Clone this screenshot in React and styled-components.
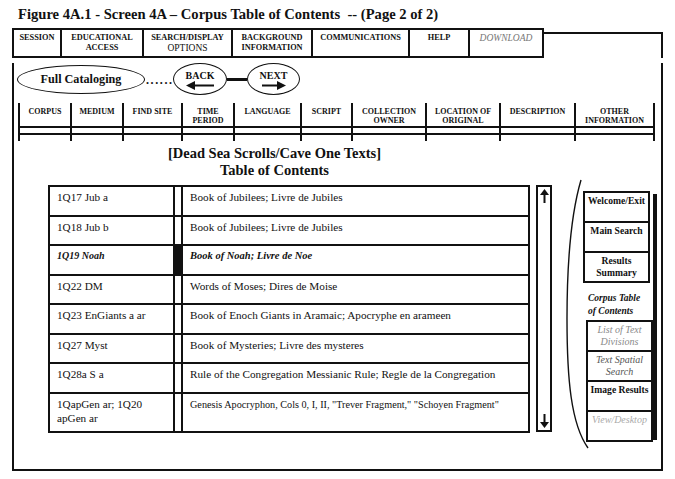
import styled, { createGlobalStyle } from "styled-components";

const GlobalStyle = createGlobalStyle`
    * { box-sizing: border-box; }
    body {
        margin: 0;
        background: #fff;
        color: #111;
        font-family: "Liberation Serif", "Times New Roman", serif;
    }
`

const menu = [
    { lines: ["SESSION"], w: 48 },
    { lines: ["EDUCATIONAL", "ACCESS"], w: 82 },
    { lines: ["SEARCH/DISPLAY"], sub: "OPTIONS", w: 89 },
    { lines: ["BACKGROUND", "INFORMATION"], w: 80 },
    { lines: ["COMMUNICATIONS"], w: 97 },
    { lines: ["HELP"], w: 60 },
    { lines: ["DOWNLOAD"], w: 74, muted: true },
]

const headers = [
    { lines: ["CORPUS"], w: 52 },
    { lines: ["MEDIUM"], w: 52 },
    { lines: ["FIND SITE"], w: 59 },
    { lines: ["TIME", "PERIOD"], w: 52 },
    { lines: ["LANGUAGE"], w: 67 },
    { lines: ["SCRIPT"], w: 51 },
    { lines: ["COLLECTION", "OWNER"], w: 74 },
    { lines: ["LOCATION OF", "ORIGINAL"], w: 74 },
    { lines: ["DESCRIPTION"], w: 75 },
    { lines: ["OTHER", "INFORMATION"], w: 81 },
]

const rows = [
    { code: "1Q17 Jub a", title: "Book of Jubilees; Livre de Jubiles" },
    { code: "1Q18 Jub b", title: "Book of Jubilees; Livre de Jubiles" },
    { code: "1Q19 Noah", title: "Book of Noah; Livre de Noe", selected: true },
    { code: "1Q22 DM", title: "Words of Moses; Dires de Moise" },
    { code: "1Q23 EnGiants a ar", title: "Book of Enoch Giants in Aramaic; Apocryphe en arameen" },
    { code: "1Q27 Myst", title: "Book of Mysteries; Livre des mysteres" },
    { code: "1Q28a S a", title: "Rule of the Congregation Messianic Rule; Regle de la Congregation" },
    { code: "1QapGen ar; 1Q20 apGen ar", title: "Genesis Apocryphon, Cols 0, I, II, \"Trever Fragment,\" \"Schoyen Fragment\"", small: true, last: true },
]

const sideTop = [
    { lines: ["Welcome/Exit"] },
    { lines: ["Main Search"] },
    { lines: ["Results", "Summary"] },
]

const sideBottom = [
    { lines: ["List of Text", "Divisions"], tone: "#8a8a8a" },
    { lines: ["Text Spatial", "Search"], tone: "#555" },
    { lines: ["Image Results"], bold: true },
    { lines: ["View/Desktop"], tone: "#aaa" },
]

function App() {
    return (
        <Page>
            <GlobalStyle />
            <Title>Figure 4A.1 - Screen 4A – Corpus Table of Contents &nbsp;-- (Page 2 of 2)</Title>
            <TopRow>
                <Menu>
                    {menu.map((m, i) => (
                        <MenuCell key={i} $w={m.w} $muted={m.muted}>
                            {m.lines.map(l => <div key={l}>{l}</div>)}
                            {m.sub ? <MenuSub>{m.sub}</MenuSub> : ''}
                        </MenuCell>
                    ))}
                </Menu>
                <FrameTop />
            </TopRow>
            <Body>
                <NavRow>
                    <Ellipse $w={128} $h={29}><Big>Full Cataloging</Big></Ellipse>
                    <Dots>......</Dots>
                    <Ellipse $w={54} $h={32} $col>
                        <Small>BACK</Small>
                        <Arrow dir="left" />
                    </Ellipse>
                    <Connector />
                    <Ellipse $w={53} $h={32} $col>
                        <Small>NEXT</Small>
                        <Arrow dir="right" />
                    </Ellipse>
                </NavRow>

                <HeaderGrid>
                    {headers.map((h, i) => (
                        <HeadCol key={i} $w={h.w} $last={i === headers.length - 1}>
                            <HeadLabel>{h.lines.map(l => <div key={l}>{l}</div>)}</HeadLabel>
                            <HeadGap $line />
                            <HeadGap />
                        </HeadCol>
                    ))}
                </HeaderGrid>

                <Heading>
                    <div>[Dead Sea Scrolls/Cave One Texts]</div>
                    <div>Table of Contents</div>
                </Heading>

                <Lower>
                    <Table>
                        {rows.map((r, i) => (
                            <Row key={i} $last={r.last}>
                                <Code $selected={r.selected}>{r.code}</Code>
                                <Marker $selected={r.selected} />
                                <Entry $selected={r.selected} $small={r.small}>{r.title}</Entry>
                            </Row>
                        ))}
                    </Table>
                    <Scroll>
                        <ScrollArrow up />
                        <ScrollArrow />
                    </Scroll>
                    <Bracket width="24" height="270" viewBox="0 0 24 270">
                        <path d="M16 1 C6 35 2 90 2 140 C2 200 6 245 23 269" fill="none" stroke="#111" strokeWidth="1.4" />
                    </Bracket>
                    <Side>
                        <SideStack>
                            <SideGroup $w={67}>
                                {sideTop.map((s, i) => (
                                    <SideItem key={i} $bold $last={i === sideTop.length - 1}>
                                        {s.lines.map(l => <div key={l}>{l}</div>)}
                                    </SideItem>
                                ))}
                            </SideGroup>
                            <Caption>Corpus Table<br />of Contents</Caption>
                            <SideGroup $w={67} $shift={3}>
                                {sideBottom.map((s, i) => (
                                    <SideItem key={i} $bold={s.bold} $tone={s.tone} $last={i === sideBottom.length - 1}>
                                        {s.lines.map(l => <div key={l}>{l}</div>)}
                                    </SideItem>
                                ))}
                            </SideGroup>
                        </SideStack>
                        <SideBar />
                    </Side>
                </Lower>
            </Body>
        </Page>
    )
}

function Arrow({ dir }) {
    return (
        <svg width="28" height="9" viewBox="0 0 28 9">
            {dir === "left" ? (
                <g fill="#111">
                    <rect x="7" y="3.5" width="21" height="2" />
                    <polygon points="0,4.5 9,0 9,9" />
                </g>
            ) : (
                <g fill="#111">
                    <rect x="2" y="3.5" width="18" height="2" />
                    <polygon points="26,4.5 17,0 17,9" />
                </g>
            )}
        </svg>
    )
}

function ScrollArrow({ up }) {
    return (
        <svg width="9" height="14" viewBox="0 0 9 14">
            {up ? (
                <g fill="#111">
                    <polygon points="4.5,0 0,6 9,6" />
                    <rect x="3.5" y="5" width="2" height="9" />
                </g>
            ) : (
                <g fill="#111">
                    <polygon points="4.5,14 0,8 9,8" />
                    <rect x="3.5" y="0" width="2" height="9" />
                </g>
            )}
        </svg>
    )
}

const Page = styled.div`
    width: 675px;
    height: 479px;
    overflow: hidden;
    padding: 5px 0 0 12px;
`

const Title = styled.div`
    font-size: 14.6px;
    font-weight: bold;
    line-height: 18px;
    height: 18px;
    margin-left: 6px;
    white-space: nowrap;
`

const TopRow = styled.div`
    display: flex;
    align-items: flex-start;
    width: 651px;
    margin-top: 5px;
`

const Menu = styled.div`
    display: flex;
    height: 30px;
    border: 2px solid #111;
    border-right: none;
`

const MenuCell = styled.div`
    width: ${p => p.$w}px;
    border-right: 2px solid #111;
    padding-top: 3px;
    text-align: center;
    font-size: ${p => p.$muted ? '9.5px' : '8.3px'};
    font-weight: ${p => p.$muted ? 'normal' : 'bold'};
    font-style: ${p => p.$muted ? 'italic' : 'normal'};
    color: ${p => p.$muted ? '#777' : '#111'};
    line-height: 10px;
`

const MenuSub = styled.div`
    font-weight: normal;
    font-size: 9.5px;
    line-height: 11px;
`

const FrameTop = styled.div`
    flex: 1;
    height: 26px;
    margin-top: 4px;
    border-top: 2px solid #111;
    border-right: 2px solid #111;
`

const Body = styled.div`
    width: 651px;
    height: 408px;
    border: 2px solid #111;
    border-top: none;
`

const NavRow = styled.div`
    display: flex;
    align-items: center;
    height: 32px;
    margin-top: 5px;
    padding-left: 3px;
`

const Ellipse = styled.div`
    width: ${p => p.$w}px;
    height: ${p => p.$h}px;
    border: 1.5px solid #111;
    border-radius: 50%;
    display: flex;
    flex-direction: ${p => p.$col ? 'column' : 'row'};
    align-items: center;
    justify-content: center;
`

const Big = styled.span`
    font-size: 12.2px;
    font-weight: bold;
`

const Small = styled.span`
    font-size: 10px;
    font-weight: bold;
    line-height: 11px;
    margin-top: 1px;
`

const Dots = styled.span`
    width: 28px;
    font-size: 12px;
    font-weight: bold;
    letter-spacing: 1.6px;
    padding-left: 1px;
    margin-top: 3px;
`

const Connector = styled.div`
    width: 20px;
    height: 3px;
    background: #111;
`

const HeaderGrid = styled.div`
    display: flex;
    margin: 8px 0 0 4px;
`

const HeadCol = styled.div`
    width: ${p => p.$w}px;
    border-left: 2px solid #111;
    border-right: ${p => p.$last ? '2px solid #111' : 'none'};
`

const HeadLabel = styled.div`
    height: 25px;
    border-bottom: 2px solid #111;
    padding-top: 4px;
    text-align: center;
    font-size: 8px;
    font-weight: bold;
    line-height: 9px;
    white-space: nowrap;
`

const HeadGap = styled.div`
    height: ${p => p.$line ? 7 : 6}px;
    border-bottom: ${p => p.$line ? '2px solid #111' : 'none'};
`

const Heading = styled.div`
    width: 521px;
    margin-top: 4px;
    text-align: center;
    font-size: 14.5px;
    font-weight: bold;
    line-height: 17px;
`

const Lower = styled.div`
    display: flex;
    align-items: flex-start;
    margin-left: 34px;
`

const Table = styled.div`
    width: 482px;
    margin-top: 6px;
    border: 2px solid #111;
`

const Row = styled.div`
    display: flex;
    height: ${p => p.$last ? '37px' : '29.5px'};
    border-bottom: ${p => p.$last ? 'none' : '2px solid #111'};
`

const Code = styled.div`
    width: 125px;
    border-right: 2px solid #111;
    padding: 3px 8px 0 7px;
    font-size: ${p => p.$selected ? '10px' : '11.2px'};
    font-weight: ${p => p.$selected ? 'bold' : 'normal'};
    font-style: ${p => p.$selected ? 'italic' : 'normal'};
    line-height: 14px;
`

const Marker = styled.div`
    width: 8px;
    border-right: 2px solid #111;
    background: ${p => p.$selected ? '#111' : '#fff'};
`

const Entry = styled.div`
    flex: 1;
    padding: ${p => p.$small ? '4px' : '3px'} 6px 0 7px;
    font-size: ${p => p.$small ? '10.2px' : p.$selected ? '10.5px' : '11.2px'};
    font-weight: ${p => p.$selected ? 'bold' : 'normal'};
    font-style: ${p => p.$selected ? 'italic' : 'normal'};
    line-height: 14px;
    white-space: nowrap;
`

const Scroll = styled.div`
    width: 16px;
    height: 247px;
    margin: 6px 0 0 6px;
    border: 2px solid #111;
    display: flex;
    flex-direction: column;
    align-items: center;
    justify-content: space-between;
    padding: 2px 0;
`

const Bracket = styled.svg`
    display: block;
    flex-shrink: 0;
    margin: 0 -6px 0 13px;
`

const Side = styled.div`
    display: flex;
    margin-top: 12px;
`

const SideStack = styled.div`
    width: 70px;
`

const SideGroup = styled.div`
    width: ${p => p.$w}px;
    margin-left: ${p => p.$shift || 0}px;
    border: 2px solid #111;
`

const SideItem = styled.div`
    height: ${p => p.$last ? '28px' : '30px'};
    border-bottom: ${p => p.$last ? 'none' : '2px solid #111'};
    padding-top: 2px;
    text-align: center;
    font-size: ${p => p.$bold ? '9.6px' : '10px'};
    font-weight: ${p => p.$bold ? 'bold' : 'normal'};
    font-style: ${p => p.$bold ? 'normal' : 'italic'};
    color: ${p => p.$tone || '#111'};
    line-height: 12px;
`

const Caption = styled.div`
    margin: 9px 0 2px 5px;
    font-size: 9.5px;
    font-weight: bold;
    font-style: italic;
    line-height: 13px;
`

const SideBar = styled.div`
    width: 4px;
    height: 246px;
    margin-top: 3px;
    background: #111;
`

export default App
